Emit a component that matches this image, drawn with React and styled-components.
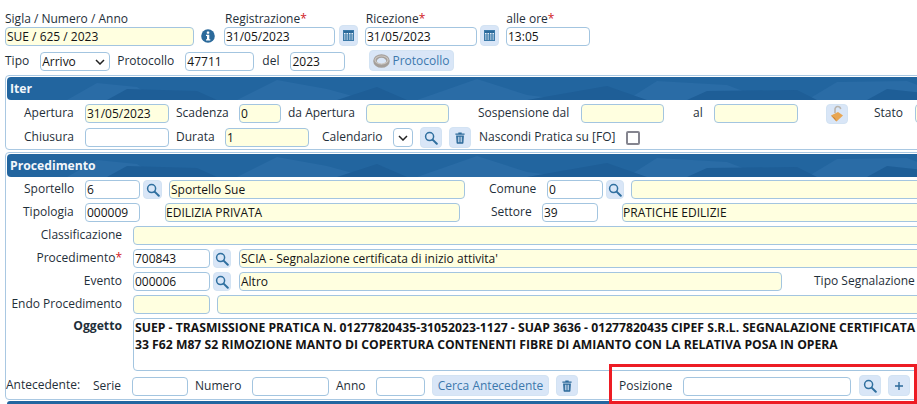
import React from "react";
import styled, { createGlobalStyle } from "styled-components";

const Global = createGlobalStyle`
  html, body { margin: 0; padding: 0; background: #fff; overflow: hidden; }
  body { width: 917px; height: 404px; font-family: "Open Sans", "Noto Sans", sans-serif; font-size: 12px; color: #1f2f3a; }
`;
const Page = styled.div`
  position: relative; width: 917px; height: 404px; overflow: hidden; padding: 11px 0 0 5px; box-sizing: border-box;
`;
const Row = styled.div`
  display: flex; align-items: ${p => p.$align || "center"}; flex: none; width: 1100px;
  height: ${p => p.$h || 19}px; margin-top: ${p => p.$mt || 0}px;
`;
const Label = styled.label`
  flex: none; align-self: center; white-space: nowrap; line-height: 16px; margin-left: ${p => p.$ml || 0}px;
  ${p => p.$w ? `width:${p.$w}px;` : ""} ${p => p.$right ? "text-align:right;" : ""}
  ${p => p.$bold ? "font-weight:700; font-size:12.2px; align-self:flex-start;" : ""}
  transform: translateY(${p => p.$dy ?? -1}px);
`;
const Star = styled.span` color: #d0191f; `;
const Input = styled.div`
  flex: none; box-sizing: border-box; height: 19px; width: ${p => p.$w}px; margin-left: ${p => p.$ml || 0}px;
  border: 1px solid #a3c5e0; border-radius: 4px; background: ${p => p.$y ? "#ffffe0" : "#fff"};
  color: #141414; line-height: 18px; padding-left: ${p => p.$pl ?? 1}px; white-space: nowrap; overflow: hidden; font-size: 12px;
`;
const SelectBox = styled(Input)`
  display: flex; align-items: center; justify-content: space-between; padding-right: ${p => p.$pr ?? 4}px;
`;
const IconBtn = styled.button`
  flex: none; box-sizing: border-box; padding: 0; display: flex; align-items: center; justify-content: center;
  width: ${p => p.$w || 22}px; height: ${p => p.$h || 21}px; margin-left: ${p => p.$ml || 0}px;
  border: 1px solid #d3e3f3; border-radius: 4px; background: #d9e6f7; color: #2c6a9a;
`;
const TextBtn = styled(IconBtn)`
  font: 12px "Open Sans", "Noto Sans", sans-serif; color: #3c78ad; gap: 2px; white-space: nowrap;
  justify-content: ${p => p.$start ? "flex-start" : "center"}; padding-left: ${p => p.$start ? 3 : 0}px;
`;
const Check = styled.span`
  flex: none; box-sizing: border-box; width: 14px; height: 14px; margin-left: ${p => p.$ml || 0}px;
  border: 2px solid #85858f; border-radius: 2px; background: #fff;
`;
const Panel = styled.section`
  box-sizing: border-box; width: 1000px; margin-top: ${p => p.$mt}px; height: ${p => p.$h}px; padding: 1px;
  border: 1px solid #a9c8e2; border-radius: 4px; background: #fff;
`;
const Header = styled.header`
  position: relative; height: 23px; border-radius: 4px 0 0 4px; overflow: hidden; background: #22659f;
  color: #f2f6fa; font-weight: 700; font-size: 12.2px; line-height: 23px; padding-left: 3px;
`;
const HeaderArt = styled.svg`
  position: absolute; left: 0; top: 0; width: 1000px; height: 23px;
`;
const HeaderTitle = styled.span` position: relative; `;
const Body = styled.div`
  display: flex; flex-direction: column; padding: ${p => p.$pt ?? 3}px 0 0 0; margin-left: -2px;
`;
const Memo = styled.div`
  box-sizing: border-box; flex: none; margin-left: 11px; width: 900px; height: 53px; border: 1px solid #a3c5e0; border-radius: 4px;
  padding: 0 0 0 1px; font-weight: 700; line-height: 17px; color: #141414; white-space: nowrap; font-size: 12.2px; background: #fff;
`;
const NextBar = styled.div`
  position: absolute; left: 7px; top: 401px; width: 910px; height: 3px; background: #22659f; border-radius: 3px 0 0 0;
`;
const Highlight = styled.div`
  position: absolute; left: 609px; top: 364px; width: 308px; height: 40px; box-sizing: border-box;
  border: 3px solid #ed1c24; pointer-events: none;
`;
const InfoIcon = styled.svg` flex: none; margin-left: 7px; align-self: center; `;

const Search = () => (
  <svg width="14" height="14" viewBox="0 0 14 14" fill="none" stroke="#2f6f9f">
    <circle cx="5.6" cy="5.6" r="4" strokeWidth="1.5" />
    <path d="M8.6 8.6 L12.8 12.8" strokeWidth="2" strokeLinecap="round" />
  </svg>
);
const Trash = () => (
  <svg width="10" height="12" viewBox="0 0 12 14" fill="#2c6a9a">
    <path d="M4 0.5h4v1h3.5v1.6H.5V1.5H4z" />
    <path fillRule="evenodd" d="M1.3 4h9.4l-.6 9a1 1 0 0 1-1 1H2.9a1 1 0 0 1-1-1zM3.5 5.5v6.5h1V5.5zM5.5 5.5v6.5h1V5.5zM7.5 5.5v6.5h1V5.5z" />
  </svg>
);
const Calc = () => (
  <svg width="11" height="11" viewBox="0 0 11 11">
    <rect x="0.5" y="0.5" width="10" height="10" fill="#e6eef7" stroke="#3b7aa9" />
    <rect x="1" y="1" width="9" height="2" fill="#2c6a9a" />
    <path d="M1 5h9M1 7h9M1 9h9M3 3v7M5.5 3v7M8 3v7" stroke="#3b7aa9" strokeWidth="1" />
  </svg>
);
const Info = () => (
  <InfoIcon width="14" height="14" viewBox="0 0 14 14">
    <circle cx="7" cy="7" r="6.8" fill="#2b6a9b" />
    <rect x="5.8" y="2.4" width="2.5" height="2.3" rx="0.6" fill="#fff" />
    <path d="M5 5.8h3.3v4.4h1v1.3H5v-1.3h1V7.1H5z" fill="#fff" />
  </InfoIcon>
);
const Chevron = () => (
  <svg width="10" height="6" viewBox="0 0 10 6" fill="none" stroke="#222" strokeWidth="1.5"><path d="M1 1l4 4 4-4" /></svg>
);
const Plus = () => (
  <svg width="10" height="10" viewBox="0 0 10 10" stroke="#2c6a9a" strokeWidth="1.4"><path d="M5 1v8M1 5h8" /></svg>
);
const Donut = () => (
  <svg width="17" height="14" viewBox="0 0 17 14">
    <ellipse cx="8.5" cy="7" rx="6.5" ry="5" fill="none" stroke="#a49f9b" strokeWidth="3.6" />
    <ellipse cx="8.5" cy="6" rx="6.5" ry="4" fill="none" stroke="#cbc7c3" strokeWidth="1.2" />
  </svg>
);
const Lock = () => (
  <svg width="14" height="18" viewBox="0 0 14 18">
    <path d="M5 8V4.5a2.8 2.8 0 0 1 5.6-.4" fill="none" stroke="#b9b4ad" strokeWidth="1.6" />
    <path d="M1 10.5 8 7l5 3.5-6.5 6z" fill="#e8a653" />
    <path d="M1 10.5l5.5 6L5 13z" fill="#c98235" />
  </svg>
);
const Art = () => (
  <HeaderArt viewBox="0 0 1000 23" preserveAspectRatio="none">
    <g fill="#2a6ca6">
      <path d="M60 23 L90 6 L130 10 L150 23z M230 23 L270 3 L320 12 L360 23z M410 23 L470 2 L520 18 L560 23z" />
      <path d="M620 23 L650 4 L720 8 L760 23z M800 23 L830 5 L900 4 L950 23z" />
    </g>
    <g fill="#1e5e97">
      <path d="M100 23 L120 12 L190 14 L210 23z M330 23 L370 10 L400 23z M520 23 L600 9 L640 23z" />
      <path d="M680 23 L700 14 L790 13 L810 23z M860 23 L880 12 L917 16 L940 23z" />
    </g>
  </HeaderArt>
);

export default function App() {
  return (
    <Page>
      <Global />
      <Row $h={14}>
        <Label $dy={1}>Sigla / Numero / Anno</Label>
        <Label $dy={1} $ml={97}>Registrazione<Star>*</Star></Label>
        <Label $dy={1} $ml={59}>Ricezione<Star>*</Star></Label>
        <Label $dy={1} $ml={81}>alle ore<Star>*</Star></Label>
      </Row>
      <Row $h={21} $align="flex-end">
        <Input $w={189} $y>SUE / 625 / 2023</Input>
        <Info />
        <Input $w={111} $ml={9}>31/05/2023</Input>
        <IconBtn $w={19} $ml={4}><Calc /></IconBtn>
        <Input $w={112} $ml={7}>31/05/2023</Input>
        <IconBtn $w={19} $ml={3}><Calc /></IconBtn>
        <Input $w={84} $ml={7}>13:05</Input>
      </Row>
      <Row $h={21} $mt={4} $align="flex-end">
        <Label $dy={0}>Tipo</Label>
        <SelectBox $w={70} $ml={11}>Arrivo<Chevron /></SelectBox>
        <Label $dy={0} $ml={7}>Protocollo</Label>
        <Input $w={69} $ml={11}>47711</Input>
        <Label $dy={0} $ml={8}>del</Label>
        <Input $w={55} $ml={11}>2023</Input>
        <TextBtn $w={85} $ml={24} $start><Donut />Protocollo</TextBtn>
      </Row>
      <Panel $mt={4} $h={75}>
        <Header><Art /><HeaderTitle>Iter</HeaderTitle></Header>
        <Body $pt={4}>
          <Row>
            <Label $ml={19} $w={61}>Apertura</Label>
            <Input $w={84} $y>31/05/2023</Input>
            <Label $ml={7} $w={63}>Scadenza</Label>
            <Input $w={42} $y>0</Input>
            <Label $ml={7} $w={78}>da Apertura</Label>
            <Input $w={83} $y />
            <Label $ml={29} $w={103}>Sospensione dal</Label>
            <Input $w={83} $y />
            <Label $ml={29} $w={21}>al</Label>
            <Input $w={84} $y />
            <IconBtn $ml={28} $h={20}><Lock /></IconBtn>
            <Label $ml={26} $w={41}>Stato</Label>
            <Input $w={60} $y />
          </Row>
          <Row $mt={5}>
            <Label $ml={19} $w={61}>Chiusura</Label>
            <Input $w={84} />
            <Label $ml={7} $w={49}>Durata</Label>
            <Input $w={84} $y>1</Input>
            <Label $ml={13} $w={71}>Calendario</Label>
            <SelectBox $w={20} $pr={3} $pl={4}><Chevron /></SelectBox>
            <IconBtn $ml={7}><Search /></IconBtn>
            <IconBtn $ml={7}><Trash /></IconBtn>
            <Label $ml={8} $w={147}>Nascondi Pratica su [FO]</Label>
            <Check />
          </Row>
        </Body>
      </Panel>
      <Panel $mt={2} $h={248}>
        <Header><Art /><HeaderTitle>Procedimento</HeaderTitle></Header>
        <Body>
          <Row>
            <Label $ml={19} $w={61}>Sportello</Label>
            <Input $w={55}>6</Input>
            <IconBtn $w={19} $h={19} $ml={3}><Search /></IconBtn>
            <Input $w={296} $ml={7} $y>Sportello Sue</Input>
            <Label $ml={24} $w={58}>Comune</Label>
            <Input $w={56}>0</Input>
            <IconBtn $w={18} $h={19} $ml={3}><Search /></IconBtn>
            <Input $w={300} $ml={7} $y />
          </Row>
          <Row $mt={4}>
            <Label $ml={18} $w={62}>Tipologia</Label>
            <Input $w={55}>000009</Input>
            <Input $w={295} $ml={25} $y $pl={0}>EDILIZIA PRIVATA</Input>
            <Label $ml={31} $w={51}>Settore</Label>
            <Input $w={56}>39</Input>
            <Input $w={300} $ml={24} $y $pl={0}>PRATICHE EDILIZIE</Input>
          </Row>
          <Row $mt={4}>
            <Label $w={117} $right>Classificazione</Label>
            <Input $w={790} $ml={11} $y />
          </Row>
          <Row $mt={4}>
            <Label $w={117} $right>Procedimento<Star>*</Star></Label>
            <Input $w={77} $ml={11}>700843</Input>
            <IconBtn $w={18} $h={19} $ml={3}><Search /></IconBtn>
            <Input $w={690} $ml={8} $y>SCIA - Segnalazione certificata di inizio attivita'</Input>
          </Row>
          <Row $mt={4}>
            <Label $w={117} $right>Evento</Label>
            <Input $w={77} $ml={11}>000006</Input>
            <IconBtn $w={18} $h={19} $ml={3}><Search /></IconBtn>
            <Input $w={543} $ml={8} $y>Altro</Input>
            <Label $ml={32}>Tipo Segnalazione</Label>
          </Row>
          <Row $mt={4}>
            <Label $w={117} $right>Endo Procedimento</Label>
            <Input $w={77} $ml={11} $y />
            <Input $w={710} $ml={7} $y />
          </Row>
          <Row $mt={4} $h={53} $align="flex-start">
            <Label $w={117} $right $bold $dy={0}>Oggetto</Label>
            <Memo>
              SUEP - TRASMISSIONE PRATICA N. 01277820435-31052023-1127 - SUAP 3636 - 01277820435 CIPEF S.R.L. SEGNALAZIONE CERTIFICATA<br />
              33 F62 M87 S2 RIMOZIONE MANTO DI COPERTURA CONTENENTI FIBRE DI AMIANTO CON LA RELATIVA POSA IN OPERA
            </Memo>
          </Row>
          <Row $h={21} $mt={4} $align="flex-end">
            <Label $dy={-1} $ml={1} $w={87}>Antecedente:</Label>
            <Label $dy={0} $w={39}>Serie</Label>
            <Input $w={56} />
            <Label $dy={0} $ml={7} $w={57}>Numero</Label>
            <Input $w={77} />
            <Label $dy={0} $ml={7} $w={40}>Anno</Label>
            <Input $w={49} />
            <TextBtn $w={117} $ml={7}>Cerca Antecedente</TextBtn>
            <IconBtn $ml={7}><Trash /></IconBtn>
            <Label $dy={0} $ml={41} $w={64}>Posizione</Label>
            <Input $w={168} />
            <IconBtn $ml={8}><Search /></IconBtn>
            <IconBtn $ml={7}><Plus /></IconBtn>
          </Row>
        </Body>
      </Panel>
      <NextBar />
      <Highlight />
    </Page>
  );
}
